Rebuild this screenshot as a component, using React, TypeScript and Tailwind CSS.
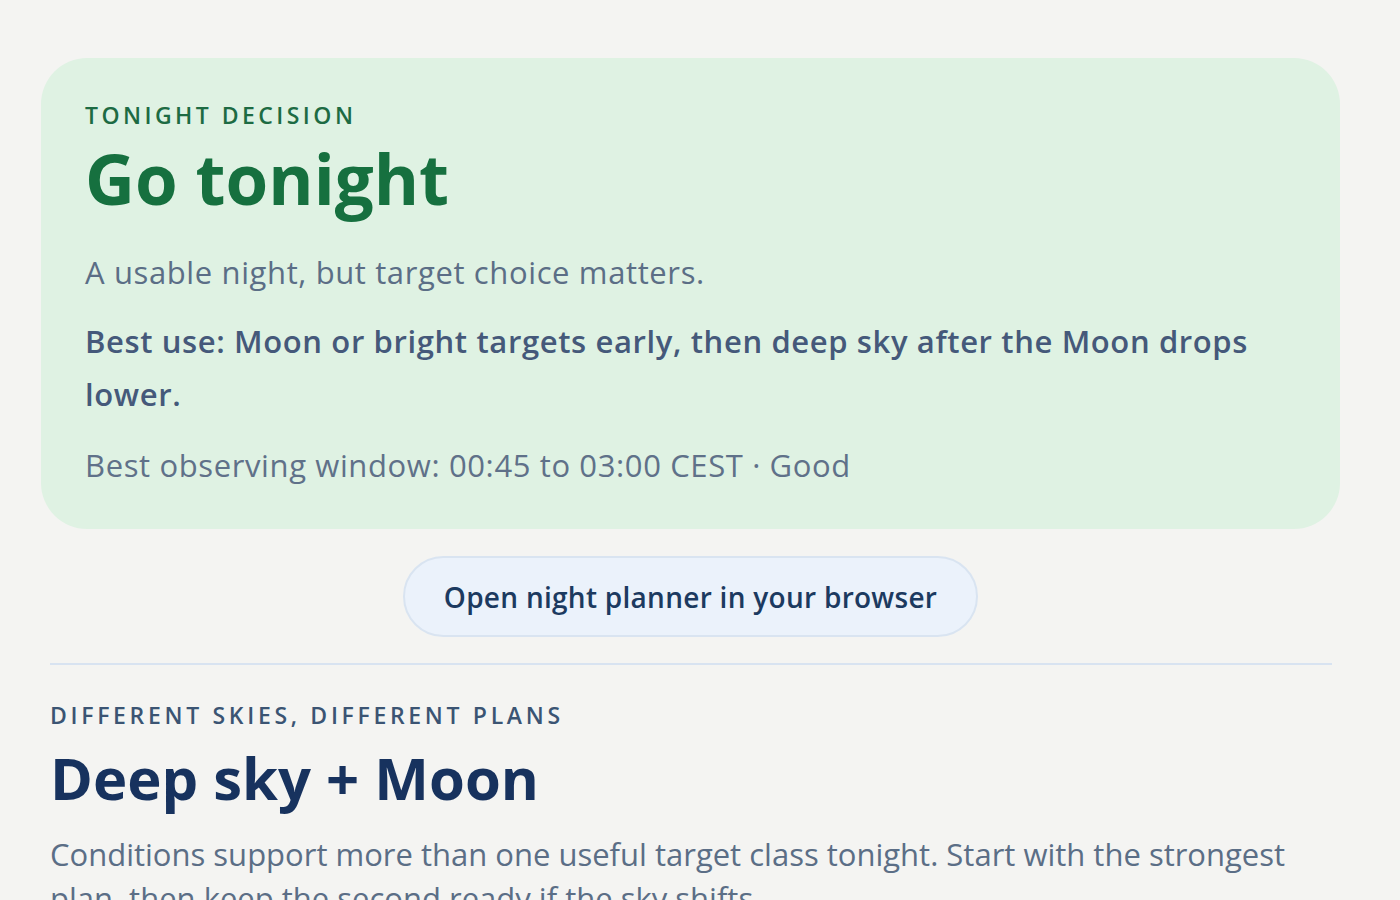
const App = () => {
    return (
        <div
            className="min-h-screen bg-[#f4f4f2] pt-[58px] overflow-hidden"
            style={{ fontFamily: "'Open Sans', 'Noto Sans', sans-serif" }}
        >
            <section className="ml-[41px] mr-[60px] rounded-[46px] bg-[#dff2e3] pl-[44px] pr-[40px] pt-[42px] pb-[42px]">
                <p className="text-[23px] leading-[30px] font-semibold tracking-[0.15em] text-[#1d6b43]">
                    TONIGHT DECISION
                </p>
                <h1 className="mt-[8px] text-[69px] leading-[80px] font-bold text-[#16703f]">
                    Go tonight
                </h1>
                <p className="mt-[32px] text-[31px] leading-[44px] tracking-[0.02em] text-[#5b6e86]">
                    A usable night, but target choice matters.
                </p>
                <p className="mt-[21px] text-[31px] leading-[53px] tracking-[0.02em] font-semibold text-[#45597a]">
                    Best use: Moon or bright targets early, then deep sky after the Moon drops lower.
                </p>
                <p className="mt-[22px] text-[31px] leading-[44px] tracking-[0.02em] text-[#5f7189]">
                    Best observing window: 00:45 to 03:00 CEST · Good
                </p>
            </section>

            <div className="flex justify-center mt-[27px] pr-[19px]">
                <button className="h-[81px] px-[39px] rounded-full bg-[#ebf2fb] border-2 border-[#d9e4f1] text-[28px] tracking-[0.01em] font-semibold text-[#1c3a60]">
                    Open night planner in your browser
                </button>
            </div>

            <div className="ml-[50px] mr-[68px] mt-[26px] border-t-2 border-[#d8e3f1]" />

            <section className="ml-[50px] mr-[68px] mt-[35px]">
                <p className="text-[23px] leading-[30px] font-semibold tracking-[0.16em] text-[#3b5473]">
                    DIFFERENT SKIES, DIFFERENT PLANS
                </p>
                <h2 className="mt-[10px] text-[58px] leading-[76px] font-bold text-[#17325e]">
                    Deep sky + Moon
                </h2>
                <p className="mt-[16px] text-[31px] leading-[44px] text-[#5b6e86]">
                    Conditions support more than one useful target class tonight. Start with the strongest
                    plan, then keep the second ready if the sky shifts.
                </p>
            </section>
        </div>
    );
};

export default App;
